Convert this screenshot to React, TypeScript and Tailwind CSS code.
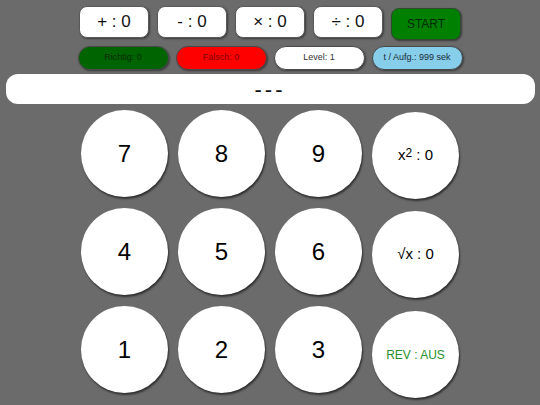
import React from "react";

const topBtn =
  "w-[70px] h-[32px] bg-white rounded-[8px] border border-[#5a5a5a] shadow-[1px_1px_2px_rgba(0,0,0,0.45)] flex items-center justify-center text-[17px] text-[#111]";
const pill =
  "w-[91px] h-[24px] rounded-full border border-[#4a4a4a] shadow-[1px_1px_2px_rgba(0,0,0,0.45)] flex items-center justify-center text-[9px]";
const circle =
  "w-[87px] h-[87px] rounded-full bg-white shadow-[1px_2px_2px_rgba(0,0,0,0.55)] flex items-center justify-center";

export default function App() {
  return (
    <div
      className="w-[540px] h-[405px] bg-[#6b6b6b] flex flex-col items-center overflow-hidden pt-[6px]"
      style={{ fontFamily: '"Liberation Sans", Arial, sans-serif' }}
    >
      <div className="flex items-start gap-[8px] h-[32px]">
        <div className={topBtn}>+ : 0</div>
        <div className={topBtn}>- : 0</div>
        <div className={topBtn}>× : 0</div>
        <div className={topBtn}>÷ : 0</div>
        <div className="relative top-[2px] w-[70px] h-[32px] bg-[#008000] rounded-[8px] border border-[#2d4a2d] shadow-[1px_1px_2px_rgba(0,0,0,0.45)] flex items-center justify-center text-[12px] text-[#062a06]">
          START
        </div>
      </div>
      <div className="mt-[8px] flex items-start gap-[7px]">
        <div className={`${pill} bg-[#006400] text-[#022a02]`}>Richtig: 0</div>
        <div className={`${pill} bg-[#ff0000] text-[#7a0000]`}>Falsch: 0</div>
        <div className={`${pill} bg-white text-[#333]`}>Level: 1</div>
        <div className={`${pill} bg-[#87ceeb] text-[#1a2a33]`}>t / Aufg.: 999 sek</div>
      </div>
      <div className="mt-[4px] w-[529px] h-[30px] bg-white rounded-[12px] flex items-center justify-center text-[22px] text-[#111] tracking-[3px]">
        ---
      </div>
      <div className="mt-[6px] grid grid-cols-[87px_87px_87px_87px] gap-x-[10px] gap-y-[11px] items-start">
        <div className={`${circle} text-[24px]`}>7</div>
        <div className={`${circle} text-[24px]`}>8</div>
        <div className={`${circle} text-[24px]`}>9</div>
        <div className={`${circle} relative top-[2px] text-[15px]`}>
          <span>
            x<sup className="text-[12px] relative -top-[3px]">2</sup> : 0
          </span>
        </div>
        <div className={`${circle} text-[24px]`}>4</div>
        <div className={`${circle} text-[24px]`}>5</div>
        <div className={`${circle} text-[24px]`}>6</div>
        <div className={`${circle} relative top-[3px] text-[15px]`}>√x : 0</div>
        <div className={`${circle} text-[24px]`}>1</div>
        <div className={`${circle} text-[24px]`}>2</div>
        <div className={`${circle} text-[24px]`}>3</div>
        <div className={`${circle} relative top-[5px] text-[12px] text-[#2a8f2a]`}>REV : AUS</div>
      </div>
    </div>
  );
}
